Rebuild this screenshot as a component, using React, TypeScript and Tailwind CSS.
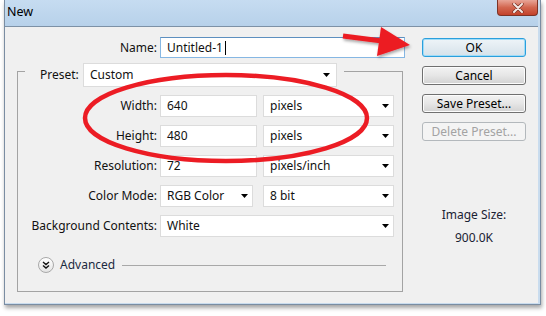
import React from "react";

function Tri() {
  return (
    <svg width="7" height="4" viewBox="0 0 7 4" className="shrink-0">
      <path d="M0 0H7L3.5 4Z" fill="#000" />
    </svg>
  );
}

function Select({ className, children }: { className: string; children: React.ReactNode }) {
  return (
    <div
      className={`flex items-center justify-between border border-[#dcdcdc] bg-white pl-[6px] pr-[4px] ${className}`}
    >
      <span>{children}</span>
      <Tri />
    </div>
  );
}

function Field({ className, children }: { className: string; children?: React.ReactNode }) {
  return (
    <div className={`flex items-center border border-[#dcdcdc] bg-white pl-[6px] ${className}`}>
      {children}
    </div>
  );
}

function Btn({ children, variant }: { children: React.ReactNode; variant?: "default" | "disabled" }) {
  if (variant === "default") {
    return (
      <div className="flex h-[19px] items-center justify-center rounded-[3px] border border-[#2b9fdc] bg-gradient-to-b from-[#eef4f8] to-[#d6e2ea] shadow-[inset_0_0_0_1px_#9fdcf8] text-black">
        {children}
      </div>
    );
  }
  if (variant === "disabled") {
    return (
      <div className="flex h-[19px] items-center justify-center rounded-[3px] border border-[#b3b8bc] bg-[#f4f4f4] text-[#a3a3a3]">
        {children}
      </div>
    );
  }
  return (
    <div className="flex h-[19px] items-center justify-center rounded-[3px] border border-[#707070] bg-gradient-to-b from-[#f3f3f3] via-[#e6e6e6] to-[#d2d2d2] shadow-[inset_0_0_0_1px_#fcfcfc] text-black">
      {children}
    </div>
  );
}

function Row({ label, children }: { label: string; children: React.ReactNode }) {
  return (
    <div className="flex h-[22px] items-center">
      <div className="w-[139px] text-right">{label}</div>
      <div className="ml-[3px] flex items-center">{children}</div>
    </div>
  );
}

export default function App() {
  return (
    <div className="relative h-[316px] w-[546px] overflow-hidden bg-white font-['Noto_Sans','Open_Sans',sans-serif] text-[12px] leading-none text-[#111]">
      <div className="ml-[4px] flex h-[305px] w-[537px] flex-col border-x border-b border-[#7a8da2] bg-[#c9dcee] pr-[2px] pb-[1px] shadow-[1px_3px_4px_rgba(0,0,0,0.35)]">
        {/* title bar */}
        <div className="flex h-[26px] items-start bg-gradient-to-b from-[#c6dcf1] to-[#b7d1ea]">
          <div className="pl-[2px] pt-[6px] text-[12.5px] text-black">New</div>
          <div className="ml-auto mr-[0px] flex h-[16px] w-[41px] items-center justify-center rounded-b-[4px] border border-t-0 border-[#7c3326] bg-gradient-to-b from-[#e8a597] via-[#d2664f] to-[#c3412a]">
            <svg width="12" height="10" viewBox="0 0 12 10">
              <path d="M2 1L10 9M10 1L2 9" stroke="#7a3326" strokeWidth="3.4" strokeLinecap="round" />
              <path d="M2 1L10 9M10 1L2 9" stroke="#f4e8e4" strokeWidth="2" strokeLinecap="round" />
            </svg>
          </div>
        </div>
        {/* client */}
        <div className="flex flex-1 border-t border-[#7d91a6] bg-[#f0f0f0]">
          {/* left column */}
          <div className="flex w-[400px] flex-col">
            <div className="mt-[10px] flex h-[21px] items-center">
              <div className="w-[152px] text-right">Name:</div>
              <div className="ml-[3px] flex h-[21px] w-[245px] items-center border border-[#86b7e3] border-t-[#5d8fbf] bg-white pl-[6px]">
                <span>Untitled-1</span>
                <span className="ml-[2px] h-[14px] w-px bg-black" />
              </div>
            </div>
            {/* group box */}
            <div className="ml-[12px] mt-[13px] h-[221px] w-[386px] border border-[#a3a3a3]">
              <div className="-mt-[9px] flex h-[24px] items-center">
                <div className="w-[7px]" />
                <div className="flex h-full w-[58px] items-center bg-[#f0f0f0] pl-[15px]">Preset:</div>
                <Select className="h-[24px] w-[254px] !pr-[6px]">Custom</Select>
                <div className="h-[17px] w-[7px] bg-[#f0f0f0]" />
              </div>
              <div className="mt-[8px] flex flex-col gap-[8px]">
                <Row label="Width:">
                  <Field className="h-[22px] w-[97px]">640</Field>
                  <Select className="ml-[6px] h-[22px] w-[131px]">pixels</Select>
                </Row>
                <Row label="Height:">
                  <Field className="h-[22px] w-[97px]">480</Field>
                  <Select className="ml-[6px] h-[22px] w-[131px]">pixels</Select>
                </Row>
                <Row label="Resolution:">
                  <Field className="h-[22px] w-[97px]">72</Field>
                  <Select className="ml-[6px] h-[22px] w-[131px]">pixels/inch</Select>
                </Row>
                <Row label="Color Mode:">
                  <Select className="h-[22px] w-[93px]">RGB Color</Select>
                  <Select className="ml-[10px] h-[22px] w-[131px]">8 bit</Select>
                </Row>
                <Row label="Background Contents:">
                  <Select className="h-[22px] w-[234px]">White</Select>
                </Row>
              </div>
              <div className="mt-[20px] flex h-[16px] items-center">
                <div className="ml-[20px] flex h-[16px] w-[16px] items-center justify-center rounded-full border border-[#a9a9a9] bg-gradient-to-b from-white to-[#e4e4e4]">
                  <svg width="8" height="8" viewBox="0 0 8 8">
                    <path d="M1 1L4 3.5L7 1M1 4.5L4 7L7 4.5" stroke="#111" strokeWidth="1.4" fill="none" />
                  </svg>
                </div>
                <div className="ml-[6px] text-[#1b2a40]">Advanced</div>
                <div className="ml-[7px] mr-[16px] h-px flex-1 bg-[#a8a8a8]" />
              </div>
            </div>
          </div>
          {/* right column */}
          <div className="ml-[17px] flex w-[104px] flex-col pt-[11px]">
            <div className="flex flex-col gap-[9px]">
              <Btn variant="default">OK</Btn>
              <Btn>Cancel</Btn>
              <Btn>Save Preset...</Btn>
              <Btn variant="disabled">Delete Preset...</Btn>
            </div>
            <div className="mt-[68px] text-center text-[#1a2233]">Image Size:</div>
            <div className="mt-[11px] text-center text-[#1a2233]">900.0K</div>
          </div>
        </div>
      </div>
      {/* red annotations */}
      <svg className="pointer-events-none absolute left-0 top-0" width="546" height="316" viewBox="0 0 546 316">
        <defs>
          <filter id="sh" x="-10%" y="-10%" width="130%" height="150%">
            <feDropShadow dx="1" dy="2" stdDeviation="1.5" floodColor="#000" floodOpacity="0.35" />
          </filter>
        </defs>
        <ellipse cx="226" cy="118" rx="141" ry="43" fill="none" stroke="#ec1c24" strokeWidth="4.5" />
        <g filter="url(#sh)">
          <path d="M343 36L386 41.5" stroke="#ec1c24" strokeWidth="5" />
          <path d="M381 27L410 45L377 56Z" fill="#ec1c24" />
        </g>
      </svg>
    </div>
  );
}
